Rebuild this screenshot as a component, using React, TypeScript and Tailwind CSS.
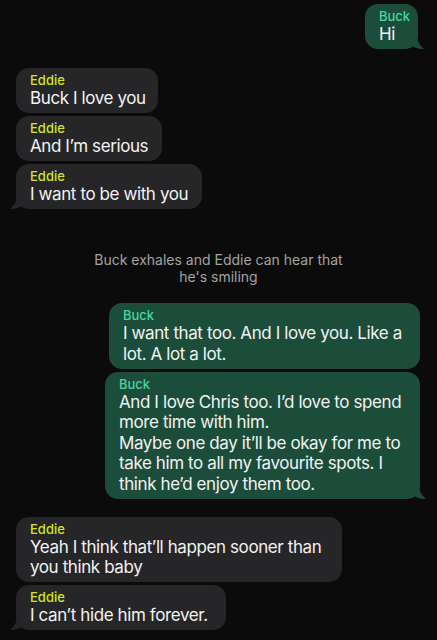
import React from "react";

type Side = "left" | "right";

function Tail({ side, color }: { side: Side; color: string }) {
  if (side === "right") {
    return (
      <svg
        className="absolute bottom-0 right-[-8px]"
        width="16"
        height="20"
        viewBox="0 0 16 20"
      >
        <path d="M0 0 L6 0 C6 9 8 15 14 20 C8 20 3 18 0 15 Z" fill={color} />
      </svg>
    );
  }
  return (
    <svg
      className="absolute bottom-0 left-[-8px]"
      width="16"
      height="20"
      viewBox="0 0 16 20"
    >
      <path d="M16 0 L10 0 C10 9 8 15 2 20 C8 20 13 18 16 15 Z" fill={color} />
    </svg>
  );
}

function Bubble({
  side,
  name,
  lines,
  w,
  tail,
  className = "",
}: {
  side: Side;
  name: string;
  lines: string[];
  w: string;
  tail?: boolean;
  className?: string;
}) {
  const isRight = side === "right";
  const bg = isRight ? "#1c4d3b" : "#262628";
  return (
    <div
      className={`relative rounded-[13px] pt-[5px] pb-[4.5px] pl-[14px] ${
        isRight ? "self-end bg-[#1c4d3b]" : "self-start bg-[#262628]"
      } ${w} ${className}`}
    >
      <div
        className={`text-[13px] leading-[15px] font-medium ${
          isRight ? "text-[#41d9a0]" : "text-[#d4e41c]"
        }`}
      >
        {name}
      </div>
      <div className="text-[17px] leading-[20.5px] tracking-[-0.4px] text-[#f2f2f2]">
        {lines.map((l, i) => (
          <div key={i} className="whitespace-nowrap">
            {l}
          </div>
        ))}
      </div>
      {tail && <Tail side={side} color={bg} />}
    </div>
  );
}

export default function App() {
  return (
    <div
      className="w-full min-h-[640px] bg-[#0b0b0b] overflow-hidden"
      style={{ fontFamily: "Inter, 'Noto Sans', sans-serif" }}
    >
      <div className="flex flex-col pt-[4px]">
        <Bubble side="right" name="Buck" lines={["Hi"]} w="w-[53px]" className="mr-[19px]" tail />

        <Bubble side="left" name="Eddie" lines={["Buck I love you"]} w="w-[142px]" className="ml-[16px] mt-[19px]" />
        <Bubble side="left" name="Eddie" lines={["And I’m serious"]} w="w-[146px]" className="ml-[16px] mt-[3px]" />
        <Bubble side="left" name="Eddie" lines={["I want to be with you"]} w="w-[186px]" className="ml-[16px] mt-[3px]" tail />

        <div className="mt-[42px] text-center text-[14px] leading-[17px] text-[#a3a3a3]">
          Buck exhales and Eddie can hear that
          <br />
          he's smiling
        </div>

        <Bubble
          side="right"
          name="Buck"
          lines={["I want that too. And I love you. Like a", "lot. A lot a lot."]}
          w="w-[311px]"
          className="mr-[17px] mt-[18px]"
        />
        <Bubble
          side="right"
          name="Buck"
          lines={[
            "And I love Chris too. I’d love to spend",
            "more time with him.",
            "Maybe one day it’ll be okay for me to",
            "take him to all my favourite spots. I",
            "think he’d enjoy them too.",
          ]}
          w="w-[315px]"
          className="mr-[17px] mt-[3px]"
          tail
        />

        <Bubble
          side="left"
          name="Eddie"
          lines={["Yeah I think that’ll happen sooner than", "you think baby"]}
          w="w-[326px]"
          className="ml-[16px] mt-[18px]"
        />
        <Bubble
          side="left"
          name="Eddie"
          lines={["I can’t hide him forever."]}
          w="w-[210px]"
          className="ml-[16px] mt-[3px]"
          tail
        />
      </div>
    </div>
  );
}
